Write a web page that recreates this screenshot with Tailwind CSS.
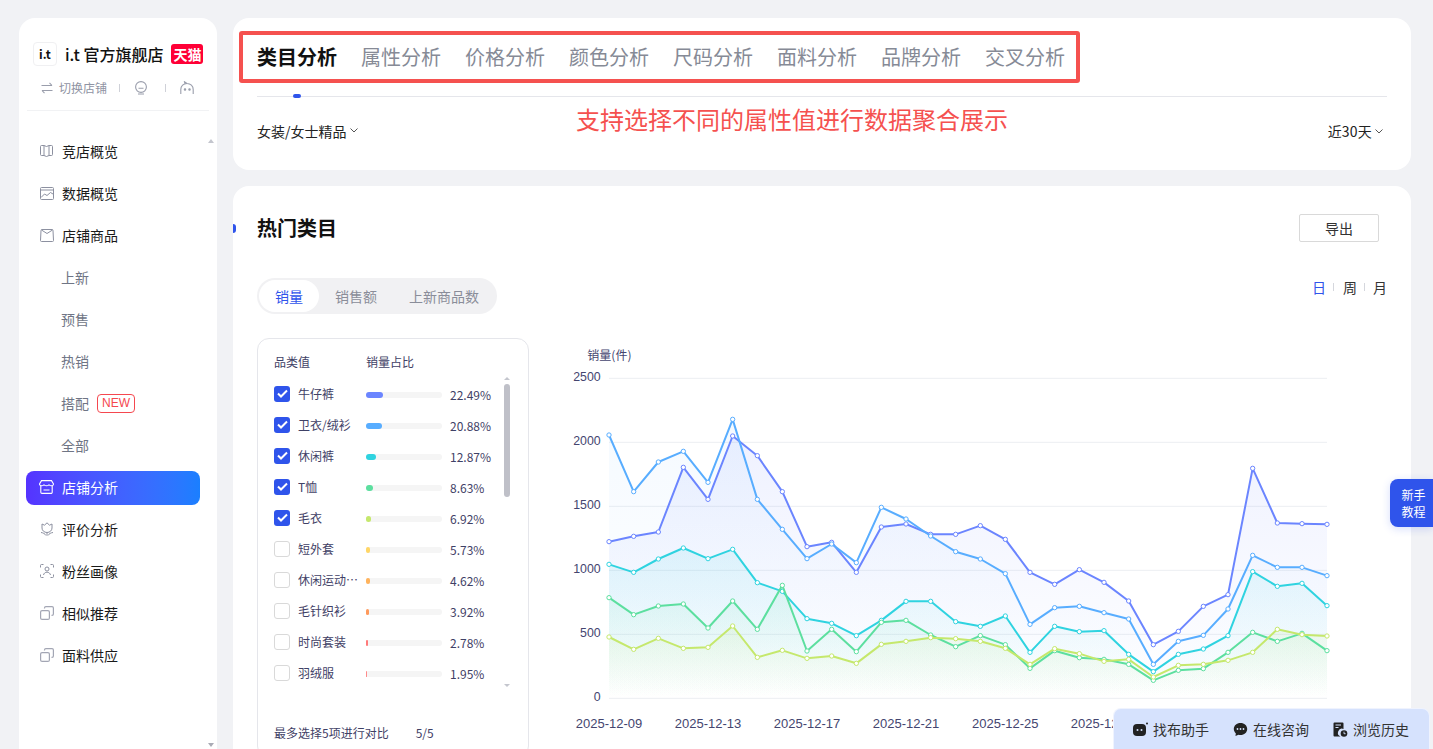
<!DOCTYPE html>
<html lang="zh">
<head>
<meta charset="utf-8">
<title>类目分析</title>
<script src="https://cdn.jsdelivr.net/npm/@tailwindcss/browser@4"></script>
</head>
<body class="h-[749px] w-[1433px] overflow-hidden bg-[#f1f2f5] font-['Noto_Sans_CJK_SC','Liberation_Sans',sans-serif] text-[#1a1a1a]">
<div class="relative flex h-[749px] gap-4 pl-[19px] pt-[18px]">

  <!-- Sidebar -->
  <aside class="relative h-[760px] w-[198px] shrink-0 rounded-2xl bg-white pt-6">
    <div class="flex h-6 items-center pl-[14px]">
      <div class="flex h-6 w-6 items-center justify-center rounded-[4px] border border-[#f0f0f2] text-[12px] font-bold leading-none text-[#111]">i.t</div>
      <span class="ml-2 whitespace-nowrap text-[16px] font-medium leading-6 text-[#111]">i.t 官方旗舰店</span>
      <span class="ml-2 flex h-5 w-8 shrink-0 items-center justify-center rounded-[3px] bg-[#ff0036] text-[14px] font-bold leading-none text-white">天猫</span>
    </div>
    <div class="mt-[13px] flex h-[18px] items-center pl-[22px] text-[12px] leading-[18px] text-[#8f93a3]">
      <svg class="h-3 w-3 shrink-0" viewBox="0 0 12 12" fill="none" stroke="#9a9eac" stroke-width="1.1"><path d="M0.5 3.5h10.5M8.5 0.8 11 3.5M11.5 8.5H1M3.5 11.2 1 8.5"/></svg>
      <span class="ml-[6px] whitespace-nowrap">切换店铺</span>
      <span class="ml-3 h-2 w-px bg-[#cfd1d8]"></span>
      <svg class="ml-[14px] h-[14px] w-[14px] shrink-0" viewBox="0 0 14 14" fill="none" stroke="#9a9eac" stroke-width="1.1"><circle cx="7" cy="6" r="5.4"/><path d="M4.5 7.2h5M4 13h6"/></svg>
      <span class="ml-[17px] h-2 w-px bg-[#cfd1d8]"></span>
      <svg class="ml-[14px] h-[14px] w-[14px] shrink-0" viewBox="0 0 14 14" fill="none" stroke="#9a9eac" stroke-width="1.1"><path d="M0.8 13V8.5C0.8 5 3.5 2.5 7 2.5s6.2 2.5 6.2 6V13M5 2.8 4.5 0.8 7 2.5"/><circle cx="5" cy="8.5" r=".7" fill="#9a9eac"/><circle cx="9.5" cy="8.5" r=".7" fill="#9a9eac"/></svg>
    </div>
    <div class="mx-2 mt-[13px] h-px bg-[#f1f2f4]"></div>

    <nav class="mt-5 px-[7px] text-[14px] leading-5">
      <a class="flex h-[42px] items-center pb-[2px] pl-[14px]">
        <svg class="mr-[9px] h-[14px] w-[13px] shrink-0" viewBox="0 0 13 14" fill="none" stroke="#8c90a0" stroke-width="1"><path d="M4 1.5H1.5a1 1 0 0 0-1 1v8a1 1 0 0 0 1 1H4l2.5 1 2.5-1h2.500a1 1 0 0 0 1-1v-8a1 1 0 0 0-1-1H9L6.500 2.500zM4 1.500v10M9 1.500v10"/></svg>
        <span>竞店概览</span>
      </a>
      <a class="flex h-[42px] items-center pb-[2px] pl-[14px]">
        <svg class="mr-2 h-[13px] w-[14px] shrink-0" viewBox="0 0 14 13" fill="none" stroke="#8c90a0" stroke-width="1"><rect x=".5" y=".5" width="13" height="12" rx="1"/><path d="M.5 3h13M1 10.500l3.500-3.500 2.500 1.500 3.500-3 2.500 1.500"/></svg>
        <span>数据概览</span>
      </a>
      <a class="flex h-[42px] items-center pb-[2px] pl-[14px]">
        <svg class="mr-2 h-[13px] w-[14px] shrink-0" viewBox="0 0 14 13" fill="none" stroke="#8c90a0" stroke-width="1"><path d="M2 .5h10a1 1 0 0 1 1 1l.5 10a1 1 0 0 1-1 1h-11a1 1 0 0 1-1-1l.5-10a1 1 0 0 1 1-1zM1.500 1 7 4.500 12.500 1"/></svg>
        <span>店铺商品</span>
      </a>
      <a class="flex h-[42px] items-center pb-[2px] pl-[35px] text-[#6f7585]">上新</a>
      <a class="flex h-[42px] items-center pb-[2px] pl-[35px] text-[#6f7585]">预售</a>
      <a class="flex h-[42px] items-center pb-[2px] pl-[35px] text-[#6f7585]">热销</a>
      <a class="flex h-[42px] items-center pb-[2px] pl-[35px] text-[#6f7585]">搭配<span class="ml-2 flex h-[19px] w-[38px] items-center justify-center rounded-[4px] border border-[#f5484f] font-['Liberation_Sans',sans-serif] text-[12px] leading-none text-[#f5484f]">NEW</span></a>
      <a class="flex h-[42px] items-center pb-[2px] pl-[35px] text-[#6f7585]">全部</a>
      <div class="flex h-[42px] items-center">
        <a class="flex h-[34px] w-[174px] items-center rounded-lg bg-gradient-to-r from-[#5533ff] to-[#1a7fff] pb-[2px] pl-[13px] text-white">
          <svg class="mr-2 h-[14px] w-[15px] shrink-0" viewBox="0 0 15 14" fill="none" stroke="#fff" stroke-width="1.1"><path d="M2.500 .6h10l2 3.400c0 1-.8 1.800-2 1.800-1 0-1.800-.4-2.500-1-.7.6-1.500 1-2.500 1s-1.800-.4-2.500-1c-.7.6-1.500 1-2.500 1-1.200 0-2-.8-2-1.800zM1.800 6v6.200a1.200 1.200 0 0 0 1.200 1.200h9a1.200 1.200 0 0 0 1.200-1.200V6M4.500 10h6"/></svg>
          <span>店铺分析</span>
        </a>
      </div>
      <a class="flex h-[42px] items-center pb-[2px] pl-[14px]">
        <svg class="mr-2 h-[14px] w-[14px] shrink-0" viewBox="0 0 14 14" fill="none" stroke="#8c90a0" stroke-width="1"><path d="M2 2 4.500 3.200 7 .8l2.500 2.400L12 2v4c0 2.500-2.200 4.500-5 4.500S2 8.500 2 6zM7 10.500v3M1 10.500c2 .2 4 1.200 5 3M13 10.500c-2 .2-4 1.200-5 3"/></svg>
        <span>评价分析</span>
      </a>
      <a class="flex h-[42px] items-center pb-[2px] pl-[14px]">
        <svg class="mr-2 h-[14px] w-[14px] shrink-0" viewBox="0 0 14 14" fill="none" stroke="#8c90a0" stroke-width="1"><path d="M.5 3.500V1.500a1 1 0 0 1 1-1h2M10.500.5h2a1 1 0 0 1 1 1v2M13.500 10.500v2a1 1 0 0 1-1 1h-2M3.500 13.500h-2a1 1 0 0 1-1-1v-2"/><circle cx="7" cy="5" r="2"/><path d="M3.500 11c.4-1.800 1.800-2.800 3.500-2.800s3.100 1 3.500 2.800"/></svg>
        <span>粉丝画像</span>
      </a>
      <a class="flex h-[42px] items-center pb-[2px] pl-[14px]">
        <svg class="mr-2 h-[14px] w-[14px] shrink-0" viewBox="0 0 14 14" fill="none" stroke="#a3a6b4" stroke-width="1.200"><rect x=".6" y="4.600" width="8.800" height="8.800" rx="1.500"/><path d="M4.500 2.500V2A1.400 1.400 0 0 1 5.900.6h6.100A1.400 1.400 0 0 1 13.400 2v6a1.400 1.400 0 0 1-1.400 1.400h-.5"/></svg>
        <span>相似推荐</span>
      </a>
      <a class="flex h-[42px] items-center pb-[2px] pl-[14px]">
        <svg class="mr-2 h-[14px] w-[14px] shrink-0" viewBox="0 0 14 14" fill="none" stroke="#a3a6b4" stroke-width="1.200"><rect x=".6" y="4.600" width="8.800" height="8.800" rx="1.500"/><path d="M4.500 2.500V2A1.400 1.400 0 0 1 5.900.6h6.100A1.400 1.400 0 0 1 13.400 2v6a1.400 1.400 0 0 1-1.400 1.400h-.5"/></svg>
        <span>面料供应</span>
      </a>
    </nav>
    <span class="absolute left-[189px] top-[121px] h-0 w-0 border-x-[3.500px] border-b-[4px] border-x-transparent border-b-[#c4c6ce]"></span>
    <span class="absolute left-[189px] top-[725px] h-0 w-0 border-x-[3.500px] border-t-[4px] border-x-transparent border-t-[#a9abb5]"></span>
  </aside>

  <!-- Main -->
  <main class="w-[1178px] shrink-0">
    <section class="relative h-[152px] rounded-2xl bg-white px-6">
      <div class="relative flex h-[79px] items-start gap-6 border-b border-[#e5e6eb] pt-[24px] text-[20px] leading-[30px] text-[#868a96]">
        <span class="font-bold text-[#111]">类目分析</span>
        <span>属性分析</span>
        <span>价格分析</span>
        <span>颜色分析</span>
        <span>尺码分析</span>
        <span>面料分析</span>
        <span>品牌分析</span>
        <span>交叉分析</span>
        <span class="absolute bottom-[-2px] left-9 h-1 w-2 rounded-full bg-[#2f54eb]"></span>
      </div>
      <div class="flex h-[70px] items-center justify-between pb-[2px] text-[14px] leading-5 text-[#222]">
        <span class="flex items-center">女装/女士精品<svg class="ml-[3px] mt-[-2px] h-[5px] w-2" viewBox="0 0 8 5" fill="none" stroke="#555" stroke-width="1"><path d="M.5.5 4 4 7.500.5"/></svg></span>
        <span class="mr-1 flex items-center"><span class="tracking-[0.2px]">近30天</span><svg class="ml-[3px] h-[5px] w-2" viewBox="0 0 8 5" fill="none" stroke="#555" stroke-width="1"><path d="M.5.5 4 4 7.500.5"/></svg></span>
      </div>
      <!-- annotation overlay -->
      <div class="pointer-events-none absolute left-[6px] top-[13px] h-[52px] w-[841px] rounded-[3px] border-4 border-[#f5514f]"></div>
      <div class="absolute left-[343px] top-[83px] whitespace-nowrap text-[24px] leading-9 text-[#f5514f]">支持选择不同的属性值进行数据聚合展示</div>
    </section>

    <section class="relative mt-4 h-[600px] rounded-2xl bg-white px-6 pt-7">
      <span class="absolute left-0 top-[38px] h-[9px] w-[3px] rounded-r-full bg-[#2f54eb]"></span>
      <div class="flex h-7 items-center justify-between">
        <h2 class="text-[20px] font-bold leading-7 text-[#111]">热门类目</h2>
        <button class="mr-2 flex h-7 w-20 items-center justify-center rounded-[2px] border border-[#d9d9d9] text-[14px] leading-5 text-[#333]">导出</button>
      </div>
      <div class="mt-9 flex items-start justify-between">
        <div class="flex h-9 items-center rounded-full bg-[#f1f1f3] px-[2px] text-[14px] leading-5 text-[#8a8d99]">
          <span class="flex h-8 items-center rounded-full bg-white px-4 text-[#2f54eb]">销量</span>
          <span class="px-4">销售额</span>
          <span class="px-4">上新商品数</span>
        </div>
        <div class="-mt-px flex h-5 items-center text-[14px] leading-5 text-[#333]">
          <span class="-ml-px text-[#2f54eb]">日</span>
          <span class="mx-[7px] h-2 w-px bg-[#d5d7dd]"></span>
          <span class="ml-[2px]">周</span>
          <span class="mx-[7px] h-2 w-px bg-[#d5d7dd]"></span>
          <span class="ml-[1px]">月</span>
        </div>
      </div>

      <div class="mt-6 flex items-start">
        <!-- list -->
        <div class="relative h-[420px] w-[272px] shrink-0 rounded-xl border border-[#e5e6eb] pl-4 pt-[14px] text-[12px] leading-[18px] text-[#3f4166]">
          <div class="flex">
            <span class="w-[92px]">品类值</span>
            <span>销量占比</span>
          </div>
          <div class="mt-[7px]">
            <div class="flex h-[31px] items-center">
              <span class="flex h-4 w-4 shrink-0 items-center justify-center rounded-[3px] bg-[#2f54eb]"><svg class="h-[9px] w-[11px]" viewBox="0 0 11 9" fill="none" stroke="#fff" stroke-width="2"><path d="M1 4.500 4 7.500 10 1.500"/></svg></span>
              <span class="ml-2 mr-[6px] w-[62px] truncate">牛仔裤</span>
              <span class="mt-[3px] h-[6px] w-[76px] rounded-full bg-[#f5f5f5]"><span class="block h-[6px] w-[22.49%] rounded-full bg-[#6b85ff]"></span></span>
              <span class="ml-2 mt-[2px]">22.49%</span>
            </div>
            <div class="flex h-[31px] items-center">
              <span class="flex h-4 w-4 shrink-0 items-center justify-center rounded-[3px] bg-[#2f54eb]"><svg class="h-[9px] w-[11px]" viewBox="0 0 11 9" fill="none" stroke="#fff" stroke-width="2"><path d="M1 4.500 4 7.500 10 1.500"/></svg></span>
              <span class="ml-2 mr-[6px] w-[62px] truncate">卫衣/绒衫</span>
              <span class="mt-[3px] h-[6px] w-[76px] rounded-full bg-[#f5f5f5]"><span class="block h-[6px] w-[20.88%] rounded-full bg-[#58adff]"></span></span>
              <span class="ml-2 mt-[2px]">20.88%</span>
            </div>
            <div class="flex h-[31px] items-center">
              <span class="flex h-4 w-4 shrink-0 items-center justify-center rounded-[3px] bg-[#2f54eb]"><svg class="h-[9px] w-[11px]" viewBox="0 0 11 9" fill="none" stroke="#fff" stroke-width="2"><path d="M1 4.500 4 7.500 10 1.500"/></svg></span>
              <span class="ml-2 mr-[6px] w-[62px] truncate">休闲裤</span>
              <span class="mt-[3px] h-[6px] w-[76px] rounded-full bg-[#f5f5f5]"><span class="block h-[6px] w-[12.87%] rounded-full bg-[#2fd3e0]"></span></span>
              <span class="ml-2 mt-[2px]">12.87%</span>
            </div>
            <div class="flex h-[31px] items-center">
              <span class="flex h-4 w-4 shrink-0 items-center justify-center rounded-[3px] bg-[#2f54eb]"><svg class="h-[9px] w-[11px]" viewBox="0 0 11 9" fill="none" stroke="#fff" stroke-width="2"><path d="M1 4.500 4 7.500 10 1.500"/></svg></span>
              <span class="ml-2 mr-[6px] w-[62px] truncate">T恤</span>
              <span class="mt-[3px] h-[6px] w-[76px] rounded-full bg-[#f5f5f5]"><span class="block h-[6px] w-[8.63%] rounded-full bg-[#5cdf9f]"></span></span>
              <span class="ml-2 mt-[2px]">8.63%</span>
            </div>
            <div class="flex h-[31px] items-center">
              <span class="flex h-4 w-4 shrink-0 items-center justify-center rounded-[3px] bg-[#2f54eb]"><svg class="h-[9px] w-[11px]" viewBox="0 0 11 9" fill="none" stroke="#fff" stroke-width="2"><path d="M1 4.500 4 7.500 10 1.500"/></svg></span>
              <span class="ml-2 mr-[6px] w-[62px] truncate">毛衣</span>
              <span class="mt-[3px] h-[6px] w-[76px] rounded-full bg-[#f5f5f5]"><span class="block h-[6px] w-[6.92%] rounded-full bg-[#c5e86c]"></span></span>
              <span class="ml-2 mt-[2px]">6.92%</span>
            </div>
            <div class="flex h-[31px] items-center">
              <span class="h-4 w-4 shrink-0 rounded-[3px] border border-[#d9d9d9]"></span>
              <span class="ml-2 mr-[6px] w-[62px] truncate">短外套</span>
              <span class="mt-[3px] h-[6px] w-[76px] rounded-full bg-[#f5f5f5]"><span class="block h-[6px] w-[5.73%] rounded-full bg-[#ffd666]"></span></span>
              <span class="ml-2 mt-[2px]">5.73%</span>
            </div>
            <div class="flex h-[31px] items-center">
              <span class="h-4 w-4 shrink-0 rounded-[3px] border border-[#d9d9d9]"></span>
              <span class="ml-2 mr-[6px] w-[62px] truncate">休闲运动套装</span>
              <span class="mt-[3px] h-[6px] w-[76px] rounded-full bg-[#f5f5f5]"><span class="block h-[6px] w-[4.62%] rounded-full bg-[#ffb35c]"></span></span>
              <span class="ml-2 mt-[2px]">4.62%</span>
            </div>
            <div class="flex h-[31px] items-center">
              <span class="h-4 w-4 shrink-0 rounded-[3px] border border-[#d9d9d9]"></span>
              <span class="ml-2 mr-[6px] w-[62px] truncate">毛针织衫</span>
              <span class="mt-[3px] h-[6px] w-[76px] rounded-full bg-[#f5f5f5]"><span class="block h-[6px] w-[3.92%] rounded-full bg-[#ff9a5c]"></span></span>
              <span class="ml-2 mt-[2px]">3.92%</span>
            </div>
            <div class="flex h-[31px] items-center">
              <span class="h-4 w-4 shrink-0 rounded-[3px] border border-[#d9d9d9]"></span>
              <span class="ml-2 mr-[6px] w-[62px] truncate">时尚套装</span>
              <span class="mt-[3px] h-[6px] w-[76px] rounded-full bg-[#f5f5f5]"><span class="block h-[6px] w-[2.78%] rounded-full bg-[#ff7a7a]"></span></span>
              <span class="ml-2 mt-[2px]">2.78%</span>
            </div>
            <div class="flex h-[31px] items-center">
              <span class="h-4 w-4 shrink-0 rounded-[3px] border border-[#d9d9d9]"></span>
              <span class="ml-2 mr-[6px] w-[62px] truncate">羽绒服</span>
              <span class="mt-[3px] h-[6px] w-[76px] rounded-full bg-[#f5f5f5]"><span class="block h-[6px] w-[1.95%] rounded-full bg-[#ff8a8a]"></span></span>
              <span class="ml-2 mt-[2px]">1.95%</span>
            </div>
          </div>
          <div class="mt-9 flex gap-[27px]">
            <span>最多选择5项进行对比</span>
            <span>5/5</span>
          </div>
          <span class="absolute left-[246px] top-[45px] h-[113px] w-[6px] rounded-full bg-[#bfc0c8]"></span>
          <span class="absolute left-[246px] top-[38px] h-0 w-0 border-x-[3px] border-b-[3px] border-x-transparent border-b-[#c4c6ce]"></span>
          <span class="absolute left-[246px] top-[345px] h-0 w-0 border-x-[3px] border-t-[3px] border-x-transparent border-t-[#c4c6ce]"></span>
        </div>

        <!-- chart -->
        <svg class="ml-[31px] mt-3 block h-[399px] w-[780px] shrink-0 overflow-visible" viewBox="0 0 2340 1197" fill="none">
          <defs>
            <linearGradient id="g1" x1="0" y1="0" x2="0" y2="1"><stop offset="0" stop-color="#6b85ff" stop-opacity=".11"/><stop offset="1" stop-color="#6b85ff" stop-opacity="0"/></linearGradient>
            <linearGradient id="g2" x1="0" y1="0" x2="0" y2="1"><stop offset="0" stop-color="#58adff" stop-opacity=".06"/><stop offset="1" stop-color="#58adff" stop-opacity="0"/></linearGradient>
            <linearGradient id="g3" x1="0" y1="0" x2="0" y2="1"><stop offset="0" stop-color="#2fd3e0" stop-opacity=".11"/><stop offset="1" stop-color="#2fd3e0" stop-opacity="0"/></linearGradient>
            <linearGradient id="g4" x1="0" y1="0" x2="0" y2="1"><stop offset="0" stop-color="#5cdf9f" stop-opacity=".1"/><stop offset="1" stop-color="#5cdf9f" stop-opacity="0"/></linearGradient>
            <linearGradient id="g5" x1="0" y1="0" x2="0" y2="1"><stop offset="0" stop-color="#c5e86c" stop-opacity=".12"/><stop offset="1" stop-color="#c5e86c" stop-opacity="0"/></linearGradient>
            <marker id="m1" viewBox="-10 -10 20 20" markerWidth="20" markerHeight="20" markerUnits="userSpaceOnUse"><circle r="6.500" fill="#fff" stroke="#6b85ff" stroke-width="3"/></marker>
            <marker id="m2" viewBox="-10 -10 20 20" markerWidth="20" markerHeight="20" markerUnits="userSpaceOnUse"><circle r="6.500" fill="#fff" stroke="#58adff" stroke-width="3"/></marker>
            <marker id="m3" viewBox="-10 -10 20 20" markerWidth="20" markerHeight="20" markerUnits="userSpaceOnUse"><circle r="6.500" fill="#fff" stroke="#2fd3e0" stroke-width="3"/></marker>
            <marker id="m4" viewBox="-10 -10 20 20" markerWidth="20" markerHeight="20" markerUnits="userSpaceOnUse"><circle r="6.500" fill="#fff" stroke="#5cdf9f" stroke-width="3"/></marker>
            <marker id="m5" viewBox="-10 -10 20 20" markerWidth="20" markerHeight="20" markerUnits="userSpaceOnUse"><circle r="6.500" fill="#fff" stroke="#c5e86c" stroke-width="3"/></marker>
          </defs>

          <g stroke="#eceef2" stroke-width="3">
            <path d="M147 85H2301M147 277H2301M147 469H2301M147 661H2301M147 853H2301M147 1045H2301"/>
          </g>

          <polygon fill="url(#g1)" points="147,575 221,559 295,546 370,352 444,448 518,258 592,317 667,425 741,590 815,577 889,667 964,531 1038,522 1112,553 1187,553 1261,527 1336,568 1410,667 1484,703 1558,659 1632,697 1706,753 1780,884 1855,844 1930,769 2004,734 2078,355 2152,519 2226,521 2301,523 2301,1045 147,1045"/>
          <polygon fill="url(#g2)" points="147,255 221,425 295,336 370,304 444,397 518,208 592,448 667,538 741,626 815,582 889,638 964,472 1038,507 1112,558 1187,605 1261,627 1336,671 1410,823 1484,773 1558,769 1632,788 1706,807 1780,943 1855,874 1930,856 2004,777 2078,616 2152,652 2226,652 2301,677 2301,1045 147,1045"/>
          <polygon fill="url(#g3)" points="147,643 221,667 295,627 370,594 444,626 518,598 592,698 667,724 741,806 815,820 889,857 964,811 1038,754 1112,754 1187,815 1261,829 1336,798 1410,907 1484,829 1558,845 1632,842 1706,913 1780,965 1855,913 1930,897 2004,857 2078,665 2152,709 2226,700 2301,767 2301,1045 147,1045"/>
          <polygon fill="url(#g4)" points="147,743 221,794 295,768 370,762 444,834 518,753 592,838 667,706 741,903 815,838 889,905 964,817 1038,811 1112,855 1187,890 1261,857 1336,884 1410,955 1484,902 1558,923 1632,928 1706,943 1780,991 1855,961 1930,956 2004,907 2078,847 2152,874 2226,850 2301,902 2301,1045 147,1045"/>
          <polygon fill="url(#g5)" points="147,861 221,898 295,865 370,895 444,892 518,828 592,922 667,901 741,925 815,918 889,940 964,883 1038,874 1112,863 1187,866 1261,874 1336,895 1410,943 1484,896 1558,911 1632,934 1706,928 1780,981 1855,946 1930,943 2004,931 2078,907 2152,838 2226,854 2301,858 2301,1045 147,1045"/>

          <polyline stroke="#6b85ff" stroke-width="6" stroke-linejoin="round" marker-start="url(#m1)" marker-mid="url(#m1)" marker-end="url(#m1)" points="147,575 221,559 295,546 370,352 444,448 518,258 592,317 667,425 741,590 815,577 889,667 964,531 1038,522 1112,553 1187,553 1261,527 1336,568 1410,667 1484,703 1558,659 1632,697 1706,753 1780,884 1855,844 1930,769 2004,734 2078,355 2152,519 2226,521 2301,523"/>
          <polyline stroke="#58adff" stroke-width="6" stroke-linejoin="round" marker-start="url(#m2)" marker-mid="url(#m2)" marker-end="url(#m2)" points="147,255 221,425 295,336 370,304 444,397 518,208 592,448 667,538 741,626 815,582 889,638 964,472 1038,507 1112,558 1187,605 1261,627 1336,671 1410,823 1484,773 1558,769 1632,788 1706,807 1780,943 1855,874 1930,856 2004,777 2078,616 2152,652 2226,652 2301,677"/>
          <polyline stroke="#2fd3e0" stroke-width="6" stroke-linejoin="round" marker-start="url(#m3)" marker-mid="url(#m3)" marker-end="url(#m3)" points="147,643 221,667 295,627 370,594 444,626 518,598 592,698 667,724 741,806 815,820 889,857 964,811 1038,754 1112,754 1187,815 1261,829 1336,798 1410,907 1484,829 1558,845 1632,842 1706,913 1780,965 1855,913 1930,897 2004,857 2078,665 2152,709 2226,700 2301,767"/>
          <polyline stroke="#5cdf9f" stroke-width="6" stroke-linejoin="round" marker-start="url(#m4)" marker-mid="url(#m4)" marker-end="url(#m4)" points="147,743 221,794 295,768 370,762 444,834 518,753 592,838 667,706 741,903 815,838 889,905 964,817 1038,811 1112,855 1187,890 1261,857 1336,884 1410,955 1484,902 1558,923 1632,928 1706,943 1780,991 1855,961 1930,956 2004,907 2078,847 2152,874 2226,850 2301,902"/>
          <polyline stroke="#c5e86c" stroke-width="6" stroke-linejoin="round" marker-start="url(#m5)" marker-mid="url(#m5)" marker-end="url(#m5)" points="147,861 221,898 295,865 370,895 444,892 518,828 592,922 667,901 741,925 815,918 889,940 964,883 1038,874 1112,863 1187,866 1261,874 1336,895 1410,943 1484,896 1558,911 1632,934 1706,928 1780,981 1855,946 1930,943 2004,931 2078,907 2152,838 2226,854 2301,858"/>

          <g fill="#44456f" font-size="36" font-family="'Liberation Sans','Noto Sans CJK SC',sans-serif">
            <text x="82" y="30" font-family="'Noto Sans CJK SC',sans-serif">销量(件)</text>
            <text x="122" y="93" text-anchor="end" font-size="37">2500</text>
            <text x="122" y="285" text-anchor="end" font-size="37">2000</text>
            <text x="122" y="477" text-anchor="end" font-size="37">1500</text>
            <text x="122" y="669" text-anchor="end" font-size="37">1000</text>
            <text x="122" y="861" text-anchor="end" font-size="37">500</text>
            <text x="122" y="1053" text-anchor="end" font-size="37">0</text>
            <g text-anchor="middle" font-size="39">
              <text x="147" y="1134">2025-12-09</text>
              <text x="444" y="1134">2025-12-13</text>
              <text x="741" y="1134">2025-12-17</text>
              <text x="1038" y="1134">2025-12-21</text>
              <text x="1336" y="1134">2025-12-25</text>
              <text x="1632" y="1134">2025-12-29</text>
            </g>
          </g>
        </svg>
      </div>
    </section>
  </main>

  <!-- floating -->
  <div class="absolute right-0 top-[479px] flex h-12 w-[43px] items-center justify-center rounded-l-lg bg-[#2f54eb] pl-1 text-center text-[12px] leading-[17px] text-white shadow-[0_2px_8px_rgba(47,84,235,0.2)]">新手<br>教程</div>
  <div class="absolute left-[1113px] top-[708px] flex h-[50px] w-[317px] items-start gap-6 rounded-t-lg border border-white/60 bg-[#d6e2fd] pl-[19px] pt-[10px] text-[14px] leading-5 text-[#333]">
    <span class="flex items-center gap-[5px]"><svg class="h-[15px] w-[15px]" viewBox="0 0 15 15"><rect x="0" y="2" width="13" height="12" rx="4" fill="#222"/><circle cx="4.500" cy="8" r="1" fill="#d6e2fd"/><circle cx="8.500" cy="8" r="1" fill="#d6e2fd"/><circle cx="14" cy="1.500" r="1" fill="#222"/></svg>找布助手</span>
    <span class="flex items-center gap-[5px]"><svg class="h-[15px] w-[15px]" viewBox="0 0 15 15"><path d="M7.500 1C3.700 1 .8 3.600.8 7c0 1.700.8 3.200 2 4.300L2.500 14l3-1.300c.6.200 1.300.3 2 .3 3.800 0 6.700-2.600 6.700-6S11.300 1 7.500 1z" fill="#222"/><circle cx="4.500" cy="7" r=".9" fill="#d6e2fd"/><circle cx="7.500" cy="7" r=".9" fill="#d6e2fd"/><circle cx="10.500" cy="7" r=".9" fill="#d6e2fd"/></svg>在线咨询</span>
    <span class="flex items-center gap-[5px]"><svg class="h-[15px] w-[15px]" viewBox="0 0 15 15"><path d="M1.500.5h8a1 1 0 0 1 1 1V7a4 4 0 0 0-3 7.500h-6a1 1 0 0 1-1-1v-12a1 1 0 0 1 1-1z" fill="#222"/><path d="M2.500 3h5.500M2.500 5.500h3" stroke="#d6e2fd" stroke-width="1.200"/><circle cx="11" cy="11.500" r="3.300" fill="#222"/><path d="M11 9.700v2h1.600" stroke="#d6e2fd" stroke-width=".9" fill="none"/></svg>浏览历史</span>
  </div>
</div>
</body>
</html>
